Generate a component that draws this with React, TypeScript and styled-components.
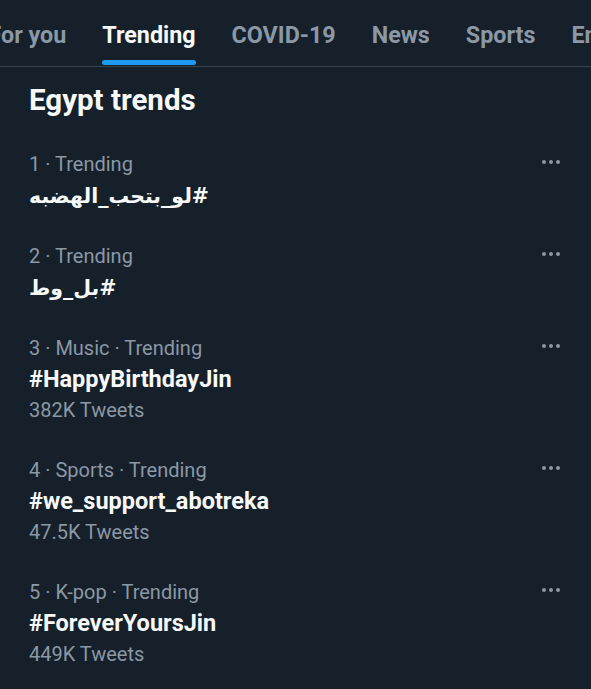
import styled, { createGlobalStyle } from "styled-components";

const GlobalStyle = createGlobalStyle`
  html, body {
    margin: 0;
    padding: 0;
    background: #15202b;
  }
  body {
    font-family: Roboto, "DejaVu Sans", sans-serif;
    color: #f7f9f9;
    overflow: hidden;
  }
`

const Page = styled.div`
  width: 591px;
  height: 689px;
  background: #15202b;
  overflow: hidden;
`

const TabBar = styled.nav`
  display: flex;
  height: 66px;
  border-bottom: 1px solid #38444d;
  margin-left: -29.5px;
  white-space: nowrap;
`

const Tab = styled.div<{ $active?: boolean }>`
  position: relative;
  display: flex;
  align-items: center;
  padding: 0 18px;
  padding-top: 4px;
  font-size: 23.3px;
  font-weight: 700;
  color: ${(p) => (p.$active ? "#f7f9f9" : "#8b98a5")};

  &::after {
    content: "";
    display: ${(p) => (p.$active ? "block" : "none")};
    position: absolute;
    left: 18px;
    right: 18px;
    bottom: 1px;
    height: 5px;
    border-radius: 3px;
    background: #1d9bf0;
  }
`

const Heading = styled.h2`
  margin: 0;
  padding: 16px 29px 18px;
  font-size: 29.5px;
  font-weight: 700;
  color: #f7f9f9;
`

const List = styled.div`
  display: flex;
  flex-direction: column;
`

const Item = styled.div`
  position: relative;
  display: flex;
  flex-direction: column;
  padding: 14px 29px 15px;
`

const Meta = styled.div`
  font-size: 20px;
  line-height: 31px;
  color: #8b98a5;
`

const Topic = styled.div<{ $rtl?: boolean }>`
  font-size: 23.5px;
  line-height: 31px;
  font-weight: 700;
  color: #f7f9f9;
  text-align: left;
  ${(p) => (p.$rtl ? `font-family: "DejaVu Sans", sans-serif; font-size: 20.5px; line-height: 32px;` : "")}
`

const Count = styled.div`
  font-size: 20px;
  line-height: 31px;
  color: #8b98a5;
`

const More = styled.div`
  position: absolute;
  right: 31px;
  top: 25px;
  display: flex;
  gap: 3px;

  span {
    width: 4px;
    height: 4px;
    border-radius: 50%;
    background: #8b98a5;
  }
`

type Trend = {
  meta: string;
  topic: string;
  rtl?: boolean;
  count?: string;
};

const trends: Trend[] = [
  { meta: "1 · Trending", topic: "#لو_بتحب_الهضبه", rtl: true },
  { meta: "2 · Trending", topic: "#بل_وط", rtl: true },
  { meta: "3 · Music · Trending", topic: "#HappyBirthdayJin", count: "382K Tweets" },
  { meta: "4 · Sports · Trending", topic: "#we_support_abotreka", count: "47.5K Tweets" },
  { meta: "5 · K-pop · Trending", topic: "#ForeverYoursJin", count: "449K Tweets" },
];

const tabs = ["For you", "Trending", "COVID-19", "News", "Sports", "Entertainment"];

export default function App() {
  return (
    <Page>
      <GlobalStyle />
      <TabBar>
        {tabs.map((t) => (
          <Tab key={t} $active={t === "Trending"}>{t}</Tab>
        ))}
      </TabBar>
      <Heading>Egypt trends</Heading>
      <List>
        {trends.map((t) => (
          <Item key={t.meta}>
            <Meta>{t.meta}</Meta>
            <Topic $rtl={t.rtl} dir={t.rtl ? "rtl" : undefined}>
              <span dir={t.rtl ? "rtl" : undefined}>{t.topic}</span>
            </Topic>
            {t.count && <Count>{t.count}</Count>}
            <More>
              <span />
              <span />
              <span />
            </More>
          </Item>
        ))}
      </List>
    </Page>
  );
}
